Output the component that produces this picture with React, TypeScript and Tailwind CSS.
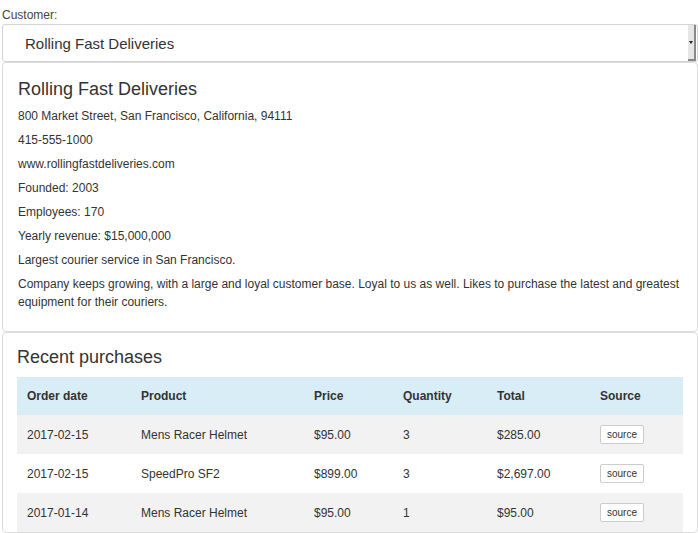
import React from 'react';

const customer = {
  name: 'Rolling Fast Deliveries',
  lines: [
    '800 Market Street, San Francisco, California, 94111',
    '415-555-1000',
    'www.rollingfastdeliveries.com',
    'Founded: 2003',
    'Employees: 170',
    'Yearly revenue: $15,000,000',
    'Largest courier service in San Francisco.',
    'Company keeps growing, with a large and loyal customer base. Loyal to us as well. Likes to purchase the latest and greatest equipment for their couriers.'
  ]
};

const purchases = [
  { date: '2017-02-15', product: 'Mens Racer Helmet', price: '$95.00', qty: '3', total: '$285.00' },
  { date: '2017-02-15', product: 'SpeedPro SF2', price: '$899.00', qty: '3', total: '$2,697.00' },
  { date: '2017-01-14', product: 'Mens Racer Helmet', price: '$95.00', qty: '1', total: '$95.00' }
];

const cols = ['Order date', 'Product', 'Price', 'Quantity', 'Total', 'Source'];
const widths = ['w-[114px]', 'w-[173px]', 'w-[89px]', 'w-[94px]', 'w-[103px]', ''];

export default function App() {
  return (
    <div className="w-[698px] pl-[2px] text-[#333] font-['Liberation_Sans',Arial,sans-serif] text-[12px]">
      <label className="block pt-[6px] leading-[18px] text-[#444]">Customer:</label>
      <div className="flex h-[38px] items-stretch rounded-[3px] border border-[#d4d4d4] bg-white">
        <div className="flex flex-1 items-center pl-[22px] pt-[2px] text-[15px]">{customer.name}</div>
        <div className="mr-px flex w-[8px] items-center justify-center border-b-2 border-r-2 border-b-[#888] border-r-[#888] bg-[#e6e6e6]">
          <span className="block h-0 w-0 border-x-[2px] border-t-[3px] border-x-transparent border-t-[#222]" />
        </div>
      </div>

      <div className="rounded-[4px] border border-[#ddd] bg-white px-[15px] pt-[16px] pb-[14px]">
        <h3 className="mb-[8px] text-[18px] leading-[20px]">{customer.name}</h3>
        {customer.lines.map((l, i) => (
          <p key={i} className="mb-[6px] leading-[18px]">
            {l}
          </p>
        ))}
      </div>

      <div className="rounded-[4px] border border-[#ddd] bg-white px-[14px] pt-[14px]">
        <h3 className="mb-[10px] text-[18px] leading-[20px]">Recent purchases</h3>
        <table className="w-full border-collapse">
          <thead>
            <tr className="bg-[#d9edf7]">
              {cols.map((c, i) => (
                <th key={c} className={`${widths[i]} h-[38px] px-[10px] text-left text-[12px] font-bold`}>
                  {c}
                </th>
              ))}
            </tr>
          </thead>
          <tbody>
            {purchases.map((p, i) => (
              <tr key={i} className={i % 2 === 0 ? 'bg-[#f2f2f2]' : 'bg-white'}>
                <td className="h-[39px] px-[10px]">{p.date}</td>
                <td className="px-[10px]">{p.product}</td>
                <td className="px-[10px]">{p.price}</td>
                <td className="px-[10px]">{p.qty}</td>
                <td className="px-[10px]">{p.total}</td>
                <td className="px-[10px]">
                  <button className="h-[19px] rounded-[2px] border border-[#ccc] bg-white px-[6px] text-[10px] leading-[17px] text-[#333]">
                    source
                  </button>
                </td>
              </tr>
            ))}
          </tbody>
        </table>
      </div>
    </div>
  );
}
